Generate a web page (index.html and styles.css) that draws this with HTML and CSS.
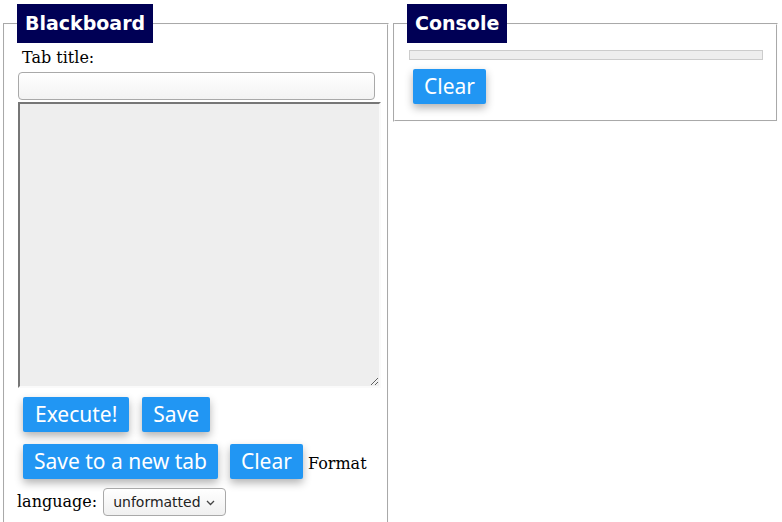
FILE: index.html
```html
<!DOCTYPE html>
<html lang="en">
<head>
<meta charset="utf-8">
<title>Blackboard</title>
<link rel="stylesheet" href="styles.css">
</head>
<body>
<div class="page">
  <fieldset class="panel panel-board">
    <legend class="panel-title">Blackboard</legend>
    <label class="field-label" for="tab-title">Tab title:</label>
    <input class="title-input" id="tab-title" type="text">
    <textarea class="editor"></textarea>
    <div class="btn-row row-first">
      <button class="btn btn-execute">Execute!</button>
      <button class="btn">Save</button>
    </div>
    <div class="btn-row row-second">
      <button class="btn">Save to a new tab</button>
      <button class="btn">Clear</button>
      <span class="inline-text">Format</span>
    </div>
    <div class="lang-row">
      <label class="inline-text" for="lang">language:</label>
      <span class="select-wrap">
        <select class="lang-select" id="lang"><option>unformatted</option></select>
        <svg class="chevron" width="9" height="6" viewBox="0 0 9 6"><path d="M1 1 L4.5 4.5 L8 1" fill="none" stroke="#444" stroke-width="1.3"/></svg>
      </span>
    </div>
  </fieldset>
  <fieldset class="panel panel-console">
    <legend class="panel-title">Console</legend>
    <div class="console-output"></div>
    <div class="btn-row console-row">
      <button class="btn">Clear</button>
    </div>
  </fieldset>
</div>
</body>
</html>
```

FILE: styles.css
```css
html, body {
  margin: 0;
  padding: 0;
  background: #fff;
}
body {
  font-family: "DejaVu Serif", serif;
  font-size: 16px;
  color: #000;
}
.page {
  display: flex;
  align-items: flex-start;
  gap: 4px;
  padding: 4px 4px 0 3px;
}
.panel {
  margin: 0;
  padding: 5px 12px 10px;
  border: 2px groove #fdfdfd;
  min-width: 0;
}
.panel-board {
  width: 386px;
  box-sizing: border-box;
  flex: none;
  display: flex;
  flex-direction: column;
  align-items: flex-start;
}
.panel-console {
  flex: 1;
  box-sizing: border-box;
  padding-bottom: 16px;
}
.panel-title {
  background: #000055;
  color: #fff;
  font-family: "DejaVu Sans", sans-serif;
  font-weight: bold;
  font-size: 19px;
  line-height: 23px;
  padding: 8px 8px;
  margin: 0;
}
.field-label {
  display: block;
  line-height: 19px;
  padding-left: 5px;
}
.title-input {
  display: block;
  box-sizing: border-box;
  width: 357px;
  height: 28px;
  margin: 5px 0 0 1px;
  border: 1px solid #a9a9a9;
  border-radius: 4px;
  background: linear-gradient(to bottom, #ffffff, #f3f3f3);
  font: inherit;
}
.editor {
  display: block;
  box-sizing: border-box;
  width: 363px;
  height: 286px;
  margin: 2px 0 0 1px;
  border-style: solid;
  border-width: 2px;
  border-color: #767676 #fafafa #fafafa #767676;
  background: #eeeeee;
  font: inherit;
}
.btn-row {
  display: flex;
  align-items: baseline;
  gap: 12px;
  padding-left: 6px;
}
.row-first {
  margin-top: 9px;
  gap: 13px;
}
.row-second {
  margin-top: 12px;
}
.console-row {
  margin-top: 9px;
  padding-left: 6px;
}
.btn {
  font-family: "Noto Sans", sans-serif;
  font-size: 21px;
  line-height: 27px;
  padding: 4px 11px;
  border: none;
  border-radius: 2px;
  background: #2196f3;
  color: #fff;
  box-shadow: 0 4px 8px rgba(0, 0, 0, 0.3);
}
.btn-execute {
  padding: 4px 12px;
}
.row-second .inline-text {
  margin-left: -7px;
}
.lang-row {
  display: flex;
  align-items: baseline;
  gap: 6px;
  margin-top: 9px;
}
.select-wrap {
  position: relative;
  display: inline-block;
}
.lang-select {
  appearance: none;
  -webkit-appearance: none;
  box-sizing: border-box;
  width: 123px;
  height: 28px;
  padding: 0 24px 0 9px;
  border: 1px solid #a9a9a9;
  border-radius: 4px;
  background: linear-gradient(to bottom, #ffffff, #f0f0f0);
  font-family: "DejaVu Sans", sans-serif;
  font-size: 14px;
  color: #222;
}
.chevron {
  position: absolute;
  right: 11px;
  top: 12px;
  pointer-events: none;
}
.console-output {
  box-sizing: border-box;
  height: 10px;
  margin: 2px 1px 0 2px;
  border: 1px solid #cccccc;
  background: #eeeeee;
}
```
